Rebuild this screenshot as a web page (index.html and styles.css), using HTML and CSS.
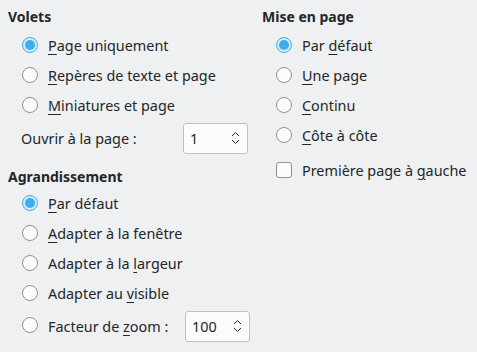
FILE: index.html
```html
<!DOCTYPE html>
<html lang="fr">
<head>
    <meta charset="UTF-8">
    <title>Options d'affichage</title>
    <link rel="stylesheet" href="styles.css">
</head>
<body>
    <div class="dialog">
        <div class="column left">
            <div class="group">
                <div class="group-title">Volets</div>
                <label class="option"><span class="radio checked"></span><span><u>P</u>age uniquement</span></label>
                <label class="option"><span class="radio"></span><span><u>R</u>epères de texte et page</span></label>
                <label class="option"><span class="radio"></span><span><u>M</u>iniatures et page</span></label>
                <div class="spin-row">
                    <span class="spin-label">Ouvrir à la pa<u>g</u>e :</span>
                    <div class="spinbox">
                        <span class="spin-value">1</span>
                        <svg class="spin-arrows" width="9" height="14" viewBox="0 0 9 14">
                            <path d="M1 5 L4.5 1.5 L8 5 M1 9 L4.5 12.5 L8 9" fill="none" stroke="#232629" stroke-width="1"/>
                        </svg>
                    </div>
                </div>
            </div>

            <div class="group second">
                <div class="group-title">Agrandissement</div>
                <label class="option"><span class="radio checked"></span><span><u>P</u>ar défaut</span></label>
                <label class="option"><span class="radio"></span><span><u>A</u>dapter à la fenêtre</span></label>
                <label class="option"><span class="radio"></span><span>Adapter à la <u>l</u>argeur</span></label>
                <label class="option"><span class="radio"></span><span>Adapter au <u>v</u>isible</span></label>
                <div class="spin-row radio-spin">
                    <span class="radio"></span>
                    <span class="spin-label">Facteur de <u>z</u>oom :</span>
                    <div class="spinbox">
                        <span class="spin-value">100</span>
                        <svg class="spin-arrows" width="9" height="14" viewBox="0 0 9 14">
                            <path d="M1 5 L4.5 1.5 L8 5 M1 9 L4.5 12.5 L8 9" fill="none" stroke="#232629" stroke-width="1"/>
                        </svg>
                    </div>
                </div>
            </div>
        </div>

        <div class="column right">
            <div class="group">
                <div class="group-title">Mise en page</div>
                <label class="option"><span class="radio checked"></span><span>Par <u>d</u>éfaut</span></label>
                <label class="option"><span class="radio"></span><span><u>U</u>ne page</span></label>
                <label class="option"><span class="radio"></span><span><u>C</u>ontinu</span></label>
                <label class="option"><span class="radio"></span><span><u>C</u>ôte à côte</span></label>
                <label class="option check-row"><span class="checkbox"></span><span>Première page à <u>g</u>auche</span></label>
            </div>
        </div>
    </div>
</body>
</html>
```

FILE: styles.css
```css
* {
    margin: 0;
    padding: 0;
    box-sizing: border-box;
}

body {
    font-family: "Noto Sans", "DejaVu Sans", sans-serif;
    font-size: 14.4px;
    color: #232629;
    background: #eff0f1;
}

.dialog {
    display: flex;
    padding: 6px 8px 0 8px;
}

.column.left {
    width: 254px;
}

.column.right {
    flex: 1;
}

.group-title {
    height: 22px;
    line-height: 22px;
    font-size: 14px;
    font-weight: bold;
    margin-bottom: 2px;
}

.group.second {
    margin-top: 12px;
}

.group.second .group-title {
    margin-bottom: 0;
}

.option {
    display: flex;
    align-items: center;
    gap: 10px;
    height: 30px;
    padding-left: 14px;
}

.option u,
.spin-label u {
    text-underline-offset: 3px;
}

.radio {
    width: 16px;
    height: 16px;
    border-radius: 50%;
    border: 1px solid #8f9193;
    background: #fcfcfc;
    flex-shrink: 0;
    position: relative;
}

.radio.checked {
    border-color: #3daee9;
    background: #d4ebf8;
}

.radio.checked::after {
    content: "";
    position: absolute;
    left: 2px;
    top: 2px;
    width: 10px;
    height: 10px;
    border-radius: 50%;
    background: #3daee9;
}

.checkbox {
    width: 16px;
    height: 16px;
    border: 1px solid #8f9193;
    border-radius: 3px;
    background: #fcfcfc;
    flex-shrink: 0;
}

.check-row {
    margin-top: 5px;
}

.spin-row {
    display: flex;
    align-items: center;
    height: 32px;
    margin-top: 2px;
    padding-left: 13px;
}

.spin-row .spin-label {
    width: 162px;
}

.radio-spin {
    padding-left: 14px;
}

.radio-spin .radio {
    margin-right: 10px;
    margin-top: -3px;
}

.radio-spin .spin-label {
    width: 137px;
}

.spinbox {
    width: 65px;
    height: 31px;
    background: #fcfcfc;
    border: 1px solid #bdbfc1;
    border-radius: 3px;
    display: flex;
    align-items: center;
    justify-content: space-between;
    padding: 0 7px 0 6px;
}

.spin-arrows {
    display: block;
}
```
